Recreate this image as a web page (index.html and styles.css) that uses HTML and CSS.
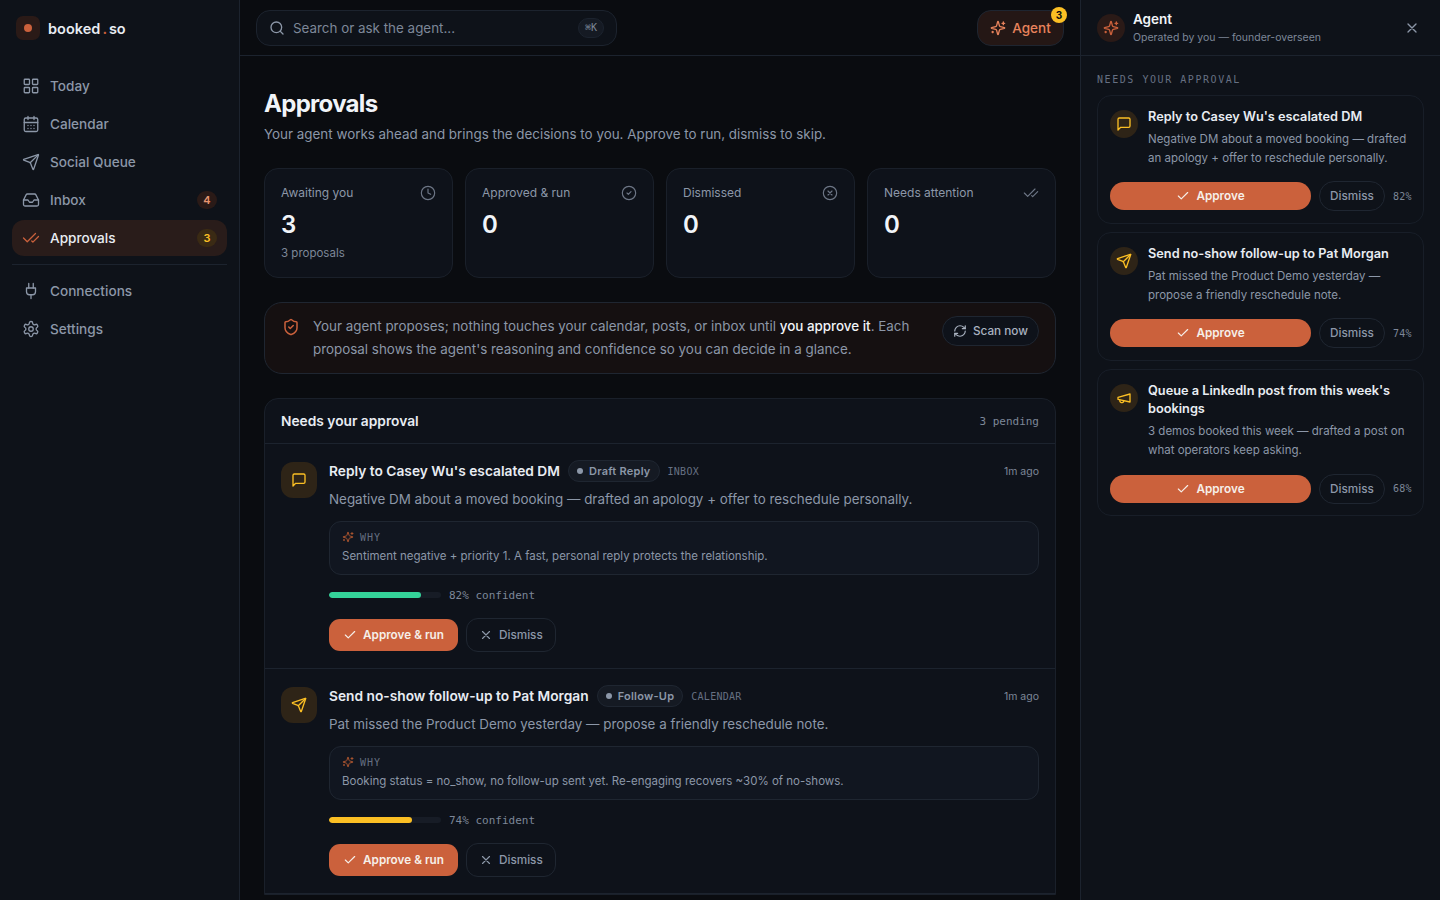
FILE: index.html
```html
<!DOCTYPE html>
<html lang="en">
<head>
    <meta charset="UTF-8">
    <meta name="viewport" content="width=device-width, initial-scale=1.0">
    <title>booked.so - Approvals</title>
    <link rel="stylesheet" href="styles.css">
</head>
<body>
    <svg class="sprite" aria-hidden="true">
        <symbol id="i-grid" viewBox="0 0 24 24"><rect x="3" y="3" width="7" height="7" rx="1"/><rect x="14" y="3" width="7" height="7" rx="1"/><rect x="14" y="14" width="7" height="7" rx="1"/><rect x="3" y="14" width="7" height="7" rx="1"/></symbol>
        <symbol id="i-calendar" viewBox="0 0 24 24"><path d="M8 2v4M16 2v4"/><rect x="3" y="4" width="18" height="18" rx="2"/><path d="M3 10h18M8 14h.01M12 14h.01M16 14h.01M8 18h.01M12 18h.01M16 18h.01"/></symbol>
        <symbol id="i-send" viewBox="0 0 24 24"><path d="M14.536 21.686a.5.5 0 0 0 .937-.024l6.5-19a.496.496 0 0 0-.635-.635l-19 6.5a.5.5 0 0 0-.024.937l7.93 3.18a2 2 0 0 1 1.112 1.11z"/><path d="m21.854 2.147-10.94 10.939"/></symbol>
        <symbol id="i-inbox" viewBox="0 0 24 24"><polyline points="22 12 16 12 14 15 10 15 8 12 2 12"/><path d="M5.45 5.11 2 12v6a2 2 0 0 0 2 2h16a2 2 0 0 0 2-2v-6l-3.45-6.89A2 2 0 0 0 16.76 4H7.24a2 2 0 0 0-1.79 1.11z"/></symbol>
        <symbol id="i-checks" viewBox="0 0 24 24"><path d="M18 6 7 17l-5-5"/><path d="m22 10-7.5 7.5L13 16"/></symbol>
        <symbol id="i-plug" viewBox="0 0 24 24"><path d="M12 22v-5M9 8V2M15 8V2"/><path d="M18 8v5a4 4 0 0 1-4 4h-4a4 4 0 0 1-4-4V8Z"/></symbol>
        <symbol id="i-settings" viewBox="0 0 24 24"><path d="M12.22 2h-.44a2 2 0 0 0-2 2v.18a2 2 0 0 1-1 1.73l-.43.25a2 2 0 0 1-2 0l-.15-.08a2 2 0 0 0-2.73.73l-.22.38a2 2 0 0 0 .73 2.73l.15.1a2 2 0 0 1 1 1.72v.51a2 2 0 0 1-1 1.74l-.15.09a2 2 0 0 0-.73 2.73l.22.38a2 2 0 0 0 2.73.73l.15-.08a2 2 0 0 1 2 0l.43.25a2 2 0 0 1 1 1.73V20a2 2 0 0 0 2 2h.44a2 2 0 0 0 2-2v-.18a2 2 0 0 1 1-1.73l.43-.25a2 2 0 0 1 2 0l.15.08a2 2 0 0 0 2.73-.73l.22-.39a2 2 0 0 0-.73-2.73l-.15-.08a2 2 0 0 1-1-1.74v-.5a2 2 0 0 1 1-1.74l.15-.09a2 2 0 0 0 .73-2.73l-.22-.38a2 2 0 0 0-2.73-.73l-.15.08a2 2 0 0 1-2 0l-.43-.25a2 2 0 0 1-1-1.73V4a2 2 0 0 0-2-2z"/><circle cx="12" cy="12" r="3"/></symbol>
        <symbol id="i-search" viewBox="0 0 24 24"><circle cx="11" cy="11" r="8"/><path d="m21 21-4.3-4.3"/></symbol>
        <symbol id="i-sparkles" viewBox="0 0 24 24"><path d="M9.937 15.5A2 2 0 0 0 8.5 14.063l-6.135-1.582a.5.5 0 0 1 0-.962L8.5 9.936A2 2 0 0 0 9.937 8.5l1.582-6.135a.5.5 0 0 1 .963 0L14.063 8.5A2 2 0 0 0 15.5 9.937l6.135 1.581a.5.5 0 0 1 0 .964L15.5 14.063a2 2 0 0 0-1.437 1.437l-1.582 6.135a.5.5 0 0 1-.963 0z"/><path d="M20 3v4M22 5h-4M4 17v2M5 18H3"/></symbol>
        <symbol id="i-clock" viewBox="0 0 24 24"><circle cx="12" cy="12" r="10"/><polyline points="12 6 12 12 16 14"/></symbol>
        <symbol id="i-circle-check" viewBox="0 0 24 24"><circle cx="12" cy="12" r="10"/><path d="m9 12 2 2 4-4"/></symbol>
        <symbol id="i-circle-x" viewBox="0 0 24 24"><circle cx="12" cy="12" r="10"/><path d="m15 9-6 6M9 9l6 6"/></symbol>
        <symbol id="i-shield" viewBox="0 0 24 24"><path d="M20 13c0 5-3.5 7.5-7.66 8.95a1 1 0 0 1-.67-.01C7.5 20.5 4 18 4 13V6a1 1 0 0 1 1-1c2 0 4.5-1.2 6.24-2.72a1.17 1.17 0 0 1 1.52 0C14.51 3.81 17 5 19 5a1 1 0 0 1 1 1z"/><path d="m9 12 2 2 4-4"/></symbol>
        <symbol id="i-refresh" viewBox="0 0 24 24"><path d="M3 12a9 9 0 0 1 9-9 9.75 9.75 0 0 1 6.74 2.74L21 8"/><path d="M21 3v5h-5"/><path d="M21 12a9 9 0 0 1-9 9 9.75 9.75 0 0 1-6.74-2.74L3 16"/><path d="M8 16H3v5"/></symbol>
        <symbol id="i-message" viewBox="0 0 24 24"><path d="M21 15a2 2 0 0 1-2 2H7l-4 4V5a2 2 0 0 1 2-2h14a2 2 0 0 1 2 2z"/></symbol>
        <symbol id="i-megaphone" viewBox="0 0 24 24"><path d="m3 11 18-5v12L3 14v-3z"/><path d="M11.6 16.8a3 3 0 1 1-5.8-1.6"/></symbol>
        <symbol id="i-x" viewBox="0 0 24 24"><path d="M18 6 6 18M6 6l12 12"/></symbol>
        <symbol id="i-check" viewBox="0 0 24 24"><path d="M20 6 9 17l-5-5"/></symbol>
    </svg>

    <div class="app">
        <aside class="sidebar">
            <div class="brand">
                <span class="brand-mark"><span class="brand-dot"></span></span>
                <span class="brand-name">booked <span class="brand-sep">.</span> so</span>
            </div>
            <nav class="nav">
                <a class="nav-item"><svg class="icon nav-icon"><use href="#i-grid"/></svg>Today</a>
                <a class="nav-item"><svg class="icon nav-icon"><use href="#i-calendar"/></svg>Calendar</a>
                <a class="nav-item"><svg class="icon nav-icon"><use href="#i-send"/></svg>Social Queue</a>
                <a class="nav-item"><svg class="icon nav-icon"><use href="#i-inbox"/></svg>Inbox<span class="nav-badge">4</span></a>
                <a class="nav-item active"><svg class="icon nav-icon"><use href="#i-checks"/></svg>Approvals<span class="nav-badge amber">3</span></a>
                <div class="nav-rule"></div>
                <a class="nav-item"><svg class="icon nav-icon"><use href="#i-plug"/></svg>Connections</a>
                <a class="nav-item"><svg class="icon nav-icon"><use href="#i-settings"/></svg>Settings</a>
            </nav>
        </aside>

        <div class="center">
            <header class="topbar">
                <div class="search">
                    <svg class="icon search-icon"><use href="#i-search"/></svg>
                    <span class="search-text">Search or ask the agent...</span>
                    <kbd class="kbd">⌘K</kbd>
                </div>
                <button class="agent-btn">
                    <svg class="icon agent-btn-icon"><use href="#i-sparkles"/></svg>Agent
                    <span class="agent-count">3</span>
                </button>
            </header>

            <main class="content">
                <h1 class="page-title">Approvals</h1>
                <p class="page-sub">Your agent works ahead and brings the decisions to you. Approve to run, dismiss to skip.</p>

                <section class="stats">
                    <div class="stat">
                        <div class="stat-head">Awaiting you<svg class="icon stat-icon"><use href="#i-clock"/></svg></div>
                        <div class="stat-value">3</div>
                        <div class="stat-note">3 proposals</div>
                    </div>
                    <div class="stat">
                        <div class="stat-head">Approved &amp; run<svg class="icon stat-icon"><use href="#i-circle-check"/></svg></div>
                        <div class="stat-value">0</div>
                    </div>
                    <div class="stat">
                        <div class="stat-head">Dismissed<svg class="icon stat-icon"><use href="#i-circle-x"/></svg></div>
                        <div class="stat-value">0</div>
                    </div>
                    <div class="stat">
                        <div class="stat-head">Needs attention<svg class="icon stat-icon"><use href="#i-checks"/></svg></div>
                        <div class="stat-value">0</div>
                    </div>
                </section>

                <section class="notice">
                    <svg class="icon notice-icon"><use href="#i-shield"/></svg>
                    <p class="notice-text">Your agent proposes; nothing touches your calendar, posts, or inbox until <strong>you approve it</strong>. Each proposal shows the agent's reasoning and confidence so you can decide in a glance.</p>
                    <button class="scan-btn"><svg class="icon scan-icon"><use href="#i-refresh"/></svg>Scan now</button>
                </section>

                <section class="queue">
                    <div class="queue-head">
                        <h2 class="queue-title">Needs your approval</h2>
                        <span class="queue-count">3 pending</span>
                    </div>

                    <article class="proposal">
                        <span class="prop-icon"><svg class="icon"><use href="#i-message"/></svg></span>
                        <div class="prop-body">
                            <div class="prop-top">
                                <h3 class="prop-title">Reply to Casey Wu's escalated DM</h3>
                                <span class="pill"><span class="pill-dot"></span>Draft Reply</span>
                                <span class="prop-source">INBOX</span>
                                <span class="prop-time">1m ago</span>
                            </div>
                            <p class="prop-desc">Negative DM about a moved booking — drafted an apology + offer to reschedule personally.</p>
                            <div class="why">
                                <div class="why-label"><svg class="icon why-icon"><use href="#i-sparkles"/></svg>WHY</div>
                                <div class="why-text">Sentiment negative + priority 1. A fast, personal reply protects the relationship.</div>
                            </div>
                            <div class="confidence">
                                <div class="meter"><div class="meter-fill green" style="width: 82%"></div></div>
                                <span class="confidence-text">82% confident</span>
                            </div>
                            <div class="prop-actions">
                                <button class="btn-approve"><svg class="icon btn-icon"><use href="#i-check"/></svg>Approve &amp; run</button>
                                <button class="btn-dismiss"><svg class="icon btn-icon"><use href="#i-x"/></svg>Dismiss</button>
                            </div>
                        </div>
                    </article>

                    <article class="proposal">
                        <span class="prop-icon"><svg class="icon"><use href="#i-send"/></svg></span>
                        <div class="prop-body">
                            <div class="prop-top">
                                <h3 class="prop-title">Send no-show follow-up to Pat Morgan</h3>
                                <span class="pill"><span class="pill-dot"></span>Follow-Up</span>
                                <span class="prop-source">CALENDAR</span>
                                <span class="prop-time">1m ago</span>
                            </div>
                            <p class="prop-desc">Pat missed the Product Demo yesterday — propose a friendly reschedule note.</p>
                            <div class="why">
                                <div class="why-label"><svg class="icon why-icon"><use href="#i-sparkles"/></svg>WHY</div>
                                <div class="why-text">Booking status = no_show, no follow-up sent yet. Re-engaging recovers ~30% of no-shows.</div>
                            </div>
                            <div class="confidence">
                                <div class="meter"><div class="meter-fill amber" style="width: 74%"></div></div>
                                <span class="confidence-text">74% confident</span>
                            </div>
                            <div class="prop-actions">
                                <button class="btn-approve"><svg class="icon btn-icon"><use href="#i-check"/></svg>Approve &amp; run</button>
                                <button class="btn-dismiss"><svg class="icon btn-icon"><use href="#i-x"/></svg>Dismiss</button>
                            </div>
                        </div>
                    </article>
                </section>
            </main>
        </div>

        <aside class="agent">
            <header class="agent-head">
                <span class="agent-avatar"><svg class="icon"><use href="#i-sparkles"/></svg></span>
                <div class="agent-meta">
                    <div class="agent-name">Agent</div>
                    <div class="agent-sub">Operated by you — founder-overseen</div>
                </div>
                <svg class="icon agent-close"><use href="#i-x"/></svg>
            </header>
            <div class="agent-body">
                <div class="agent-label">NEEDS YOUR APPROVAL</div>

                <div class="card">
                    <div class="card-top">
                        <span class="card-icon"><svg class="icon"><use href="#i-message"/></svg></span>
                        <div>
                            <div class="card-title">Reply to Casey Wu's escalated DM</div>
                            <p class="card-desc">Negative DM about a moved booking — drafted an apology + offer to reschedule personally.</p>
                        </div>
                    </div>
                    <div class="card-actions">
                        <button class="card-approve"><svg class="icon btn-icon"><use href="#i-check"/></svg>Approve</button>
                        <button class="card-dismiss">Dismiss</button>
                        <span class="card-pct">82%</span>
                    </div>
                </div>

                <div class="card">
                    <div class="card-top">
                        <span class="card-icon"><svg class="icon"><use href="#i-send"/></svg></span>
                        <div>
                            <div class="card-title">Send no-show follow-up to Pat Morgan</div>
                            <p class="card-desc">Pat missed the Product Demo yesterday — propose a friendly reschedule note.</p>
                        </div>
                    </div>
                    <div class="card-actions">
                        <button class="card-approve"><svg class="icon btn-icon"><use href="#i-check"/></svg>Approve</button>
                        <button class="card-dismiss">Dismiss</button>
                        <span class="card-pct">74%</span>
                    </div>
                </div>

                <div class="card">
                    <div class="card-top">
                        <span class="card-icon"><svg class="icon"><use href="#i-megaphone"/></svg></span>
                        <div>
                            <div class="card-title">Queue a LinkedIn post from this week's bookings</div>
                            <p class="card-desc">3 demos booked this week — drafted a post on what operators keep asking.</p>
                        </div>
                    </div>
                    <div class="card-actions">
                        <button class="card-approve"><svg class="icon btn-icon"><use href="#i-check"/></svg>Approve</button>
                        <button class="card-dismiss">Dismiss</button>
                        <span class="card-pct">68%</span>
                    </div>
                </div>
            </div>
        </aside>
    </div>
</body>
</html>
```

FILE: styles.css
```css
* {
    box-sizing: border-box;
}
html, body {
    margin: 0;
    height: 100%;
    overflow: hidden;
}
body {
    font-family: Inter, "Liberation Sans", sans-serif;
    background: #0a0c10;
    color: #e8ecf2;
}
h1, h2, h3, p {
    margin: 0;
}
button {
    font-family: inherit;
    cursor: pointer;
}
.sprite {
    display: none;
}
.icon {
    width: 16px;
    height: 16px;
    fill: none;
    stroke: currentColor;
    stroke-width: 2;
    stroke-linecap: round;
    stroke-linejoin: round;
    flex-shrink: 0;
}
.app {
    display: flex;
    height: 900px;
}

/* sidebar */
.sidebar {
    width: 240px;
    flex-shrink: 0;
    background: #0e1219;
    border-right: 1px solid #1c232e;
}
.brand {
    display: flex;
    align-items: center;
    gap: 8px;
    height: 56px;
    padding: 0 16px;
}
.brand-mark {
    width: 24px;
    height: 24px;
    border-radius: 7px;
    background: #2a1a17;
    display: flex;
    align-items: center;
    justify-content: center;
}
.brand-dot {
    width: 8px;
    height: 8px;
    border-radius: 50%;
    background: #cb613c;
}
.brand-name {
    font-size: 14.5px;
    font-weight: 600;
    word-spacing: -1.5px;
}
.brand-sep {
    color: #cb613c;
}
.nav {
    padding: 12px 12px 0;
    display: flex;
    flex-direction: column;
    gap: 2px;
}
.nav-item {
    display: flex;
    align-items: center;
    gap: 10px;
    height: 36px;
    padding: 0 10px;
    border-radius: 12px;
    font-size: 13.6px;
    font-weight: 500;
    color: #8c97a8;
}
.nav-icon {
    width: 18px;
    height: 18px;
    stroke-width: 1.75;
}
.nav-item.active {
    background: #291c1a;
    color: #e8ecf2;
}
.nav-item.active .nav-icon {
    color: #cb613c;
}
.nav-badge {
    margin-left: auto;
    width: 20px;
    height: 18px;
    border-radius: 9px;
    background: #2a1a17;
    color: #e8946f;
    font-size: 11px;
    font-weight: 600;
    display: flex;
    align-items: center;
    justify-content: center;
}
.nav-badge.amber {
    background: #3a2a14;
    color: #fbbf24;
}
.nav-rule {
    height: 1px;
    background: #1c232e;
    margin: 6px 0;
}

/* top bar */
.center {
    width: 840px;
    flex-shrink: 0;
    display: flex;
    flex-direction: column;
}
.topbar {
    height: 56px;
    flex-shrink: 0;
    display: flex;
    align-items: center;
    justify-content: space-between;
    padding: 0 16px;
    border-bottom: 1px solid #1c232e;
}
.search {
    width: 361px;
    height: 36px;
    display: flex;
    align-items: center;
    gap: 8px;
    padding: 0 12px;
    background: #0e1219;
    border: 1px solid #1c232e;
    border-radius: 14px;
}
.search-icon {
    color: #8c97a8;
}
.search-text {
    font-size: 13.4px;
    color: #7d8798;
}
.kbd {
    margin-left: auto;
    width: 26px;
    height: 20px;
    border-radius: 10px;
    background: #151a23;
    border: 1px solid #1c232e;
    color: #7d8798;
    font-family: "DejaVu Sans Mono", monospace;
    font-size: 10px;
    display: flex;
    align-items: center;
    justify-content: center;
}
.agent-btn {
    position: relative;
    width: 87px;
    height: 36px;
    display: flex;
    align-items: center;
    justify-content: center;
    gap: 6px;
    background: #241715;
    border: 1px solid #1e2530;
    border-radius: 14px;
    color: #e8835c;
    font-size: 13.5px;
    font-weight: 500;
}
.agent-btn-icon {
    color: #e8835c;
}
.agent-count {
    position: absolute;
    top: -4px;
    right: -4px;
    width: 16px;
    height: 16px;
    border-radius: 50%;
    background: #fbbf24;
    color: #0a0c10;
    font-size: 10px;
    font-weight: 700;
    display: flex;
    align-items: center;
    justify-content: center;
}

/* main column */
.content {
    flex: 1;
    overflow: hidden;
    padding: 32px 24px 0;
}
.page-title {
    font-size: 24px;
    line-height: 32px;
    font-weight: 700;
    letter-spacing: -0.7px;
    color: #f1f4f8;
}
.page-sub {
    margin-top: 4px;
    font-size: 13.4px;
    line-height: 20px;
    color: #8c97a8;
}
.stats {
    display: grid;
    grid-template-columns: repeat(4, 1fr);
    gap: 12px;
    margin-top: 24px;
}
.stat {
    height: 110px;
    padding: 16px;
    background: #0e121a;
    border: 1px solid #1a202a;
    border-radius: 14px;
}
.stat-head {
    display: flex;
    align-items: flex-start;
    justify-content: space-between;
    height: 16px;
    font-size: 12px;
    line-height: 15px;
    color: #8c97a8;
}
.stat-icon {
    color: #6d7686;
    stroke-width: 1.75;
}
.stat-value {
    margin-top: 8px;
    font-size: 24px;
    line-height: 32px;
    font-weight: 600;
    color: #f1f4f8;
}
.stat-note {
    margin-top: 4px;
    font-size: 11.5px;
    line-height: 16px;
    color: #7d8798;
}
.notice {
    display: flex;
    align-items: flex-start;
    gap: 13px;
    height: 72px;
    margin-top: 24px;
    padding: 12px 16px;
    background: #151011;
    border: 1px solid #1f2631;
    border-radius: 18px;
}
.notice-icon {
    width: 18px;
    height: 18px;
    margin: 3px 0 0 1px;
    color: #cb613c;
}
.notice-text {
    flex: 1;
    font-size: 13.4px;
    line-height: 23px;
    color: #8c97a8;
}
.notice-text strong {
    font-weight: 500;
    color: #f1f4f8;
}
.scan-btn {
    display: flex;
    align-items: center;
    gap: 6px;
    height: 30px;
    margin-top: 1px;
    margin-left: 7px;
    padding: 0 10px;
    background: #0e121a;
    border: 1px solid #1f2631;
    border-radius: 15px;
    color: #aab3c1;
    font-size: 11.75px;
    font-weight: 500;
    flex-shrink: 0;
}
.scan-icon {
    width: 14px;
    height: 14px;
}
.queue {
    margin-top: 24px;
    background: #0e121a;
    border: 1px solid #1a202a;
    border-radius: 14px 14px 0 0;
}
.queue-head {
    display: flex;
    align-items: center;
    justify-content: space-between;
    height: 45px;
    padding: 0 16px;
    border-bottom: 1px solid #1c232e;
}
.queue-title {
    font-size: 13.75px;
    font-weight: 600;
    color: #e8ecf2;
}
.queue-count {
    font-family: "DejaVu Sans Mono", monospace;
    font-size: 11px;
    color: #7d8798;
}
.proposal {
    display: flex;
    gap: 12px;
    padding: 17px 16px 16px;
    border-bottom: 1px solid #1c232e;
}
.prop-icon {
    width: 36px;
    height: 36px;
    margin-top: 1px;
    border-radius: 12px;
    background: #2e2417;
    color: #fbbf24;
    display: flex;
    align-items: center;
    justify-content: center;
    flex-shrink: 0;
}
.prop-body {
    flex: 1;
    min-width: 0;
}
.prop-top {
    display: flex;
    align-items: center;
    gap: 8px;
    height: 20px;
}
.prop-title {
    font-size: 13.75px;
    font-weight: 600;
    color: #e8ecf2;
}
.pill {
    display: flex;
    align-items: center;
    gap: 6px;
    height: 22px;
    padding: 0 8px;
    background: #151a23;
    border: 1px solid #1f2631;
    border-radius: 11px;
    font-size: 11px;
    font-weight: 600;
    letter-spacing: 0.25px;
    color: #8c97a8;
}
.pill-dot {
    width: 6px;
    height: 6px;
    border-radius: 50%;
    background: #8c97a8;
}
.prop-source {
    font-family: "DejaVu Sans Mono", monospace;
    font-size: 10px;
    letter-spacing: 0.25px;
    color: #667082;
}
.prop-time {
    margin-left: auto;
    font-size: 10.5px;
    color: #7d8798;
}
.prop-desc {
    margin-top: 8px;
    font-size: 13.4px;
    line-height: 20px;
    color: #8c97a8;
}
.why {
    height: 54px;
    margin-top: 12px;
    padding: 9px 12px;
    background: #111620;
    border: 1px solid #1f2631;
    border-radius: 12px;
}
.why-label {
    display: flex;
    align-items: center;
    gap: 6px;
    height: 12px;
    font-family: "DejaVu Sans Mono", monospace;
    font-size: 10px;
    letter-spacing: 1px;
    color: #667082;
}
.why-icon {
    width: 12px;
    height: 12px;
    color: #a7532f;
}
.why-text {
    margin-top: 4px;
    font-size: 11.5px;
    line-height: 18px;
    color: #8c97a8;
}
.confidence {
    display: flex;
    align-items: center;
    gap: 8px;
    height: 16px;
    margin-top: 12px;
}
.meter {
    width: 112px;
    height: 6px;
    border-radius: 3px;
    background: #171c26;
    overflow: hidden;
}
.meter-fill {
    height: 100%;
    border-radius: 3px;
}
.meter-fill.green {
    background: #34d399;
}
.meter-fill.amber {
    background: #fbbf24;
}
.confidence-text {
    font-family: "DejaVu Sans Mono", monospace;
    font-size: 11px;
    color: #7d8798;
}
.prop-actions {
    display: flex;
    align-items: center;
    gap: 8px;
    margin-top: 15px;
}
.btn-icon {
    width: 14px;
    height: 14px;
}
.btn-approve {
    display: flex;
    align-items: center;
    gap: 6px;
    height: 32px;
    padding: 0 14px;
    background: #cb613c;
    border: none;
    border-radius: 11px;
    color: #f6efe9;
    font-size: 11.75px;
    font-weight: 600;
}
.btn-dismiss {
    display: flex;
    align-items: center;
    gap: 6px;
    height: 34px;
    padding: 0 12px;
    background: transparent;
    border: 1px solid #1f2631;
    border-radius: 12px;
    color: #8c97a8;
    font-size: 11.75px;
    font-weight: 500;
}

/* agent panel */
.agent {
    width: 360px;
    flex-shrink: 0;
    background: #0e1219;
    border-left: 1px solid #1c232e;
}
.agent-head {
    height: 56px;
    display: flex;
    align-items: center;
    gap: 8px;
    padding: 0 20px 0 16px;
    border-bottom: 1px solid #1c232e;
}
.agent-avatar {
    width: 28px;
    height: 28px;
    border-radius: 50%;
    background: #2a1a17;
    color: #cb613c;
    display: flex;
    align-items: center;
    justify-content: center;
}
.agent-meta {
    flex: 1;
}
.agent-name {
    font-size: 13.5px;
    line-height: 18px;
    font-weight: 600;
    color: #f1f4f8;
}
.agent-sub {
    margin-top: 2px;
    font-size: 10.5px;
    line-height: 16px;
    color: #7d8798;
}
.agent-close {
    color: #8c97a8;
}
.agent-body {
    padding: 17px 16px 0;
    display: flex;
    flex-direction: column;
    gap: 8px;
}
.agent-label {
    font-family: "DejaVu Sans Mono", monospace;
    font-size: 10px;
    line-height: 14px;
    letter-spacing: 1.55px;
    color: #667082;
}
.card {
    padding: 12px 12px 11.6px;
    border: 1px solid #181e28;
    border-radius: 14px;
    background: #0e1219;
}
.card-top {
    display: flex;
    gap: 10px;
}
.card-icon {
    width: 28px;
    height: 28px;
    margin-top: 2px;
    border-radius: 50%;
    background: #2e2417;
    color: #fbbf24;
    display: flex;
    align-items: center;
    justify-content: center;
    flex-shrink: 0;
}
.card-title {
    font-size: 12.75px;
    line-height: 18.2px;
    font-weight: 600;
    color: #e8ecf2;
}
.card-desc {
    margin-top: 4px;
    font-size: 11.5px;
    line-height: 18.6px;
    color: #8c97a8;
}
.card-actions {
    display: flex;
    align-items: center;
    gap: 8px;
    margin-top: 14px;
}
.card-approve {
    flex: 1;
    display: flex;
    align-items: center;
    justify-content: center;
    gap: 6px;
    height: 28px;
    background: #cb613c;
    border: none;
    border-radius: 14px;
    color: #f6efe9;
    font-size: 11.75px;
    font-weight: 600;
}
.card-dismiss {
    width: 66px;
    height: 30px;
    padding: 0;
    background: transparent;
    border: 1px solid #1f2631;
    border-radius: 15px;
    color: #8c97a8;
    font-size: 11.75px;
    font-weight: 500;
}
.card-pct {
    width: 18px;
    font-family: "DejaVu Sans Mono", monospace;
    font-size: 10px;
    letter-spacing: 0.2px;
    white-space: nowrap;
    color: #7d8798;
}
```
